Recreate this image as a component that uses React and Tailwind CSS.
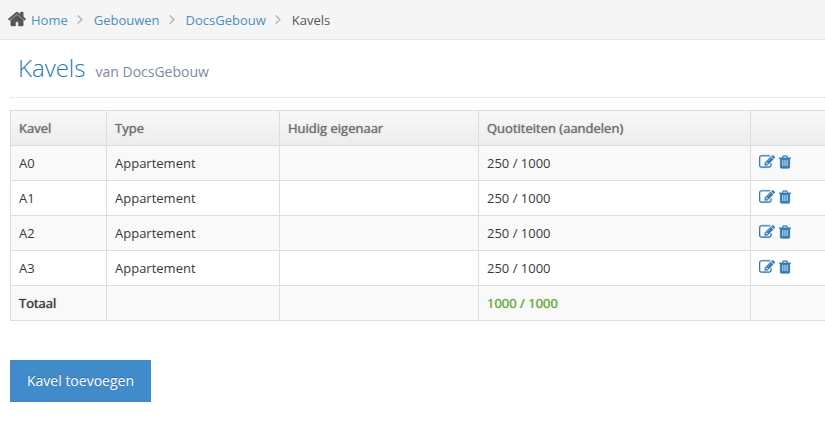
const units = [
  { name: "A0", type: "Appartement", owner: "", share: "250 / 1000" },
  { name: "A1", type: "Appartement", owner: "", share: "250 / 1000" },
  { name: "A2", type: "Appartement", owner: "", share: "250 / 1000" },
  { name: "A3", type: "Appartement", owner: "", share: "250 / 1000" },
];

const paths = {
  home: "M1472 992v480q0 26-19 45t-45 19h-384v-384h-256v384h-384q-26 0-45-19t-19-45v-480q0-1 .5-3t.5-3l575-474 575 474q1 2 1 6zm223-69l-62 74q-8 9-21 11h-3q-13 0-21-7l-692-577-692 577q-12 8-24 7-13-2-21-11l-62-74q-8-10-7-23.5t11-21.5l719-599q32-26 76-26t76 26l244 204v-195q0-14 9-23t23-9h192q14 0 23 9t9 23v408l219 182q10 8 11 21.5t-7 23.5z",
  angle: "M1171 960q0 13-10 23l-466 466q-10 10-23 10t-23-10l-50-50q-10-10-10-23t10-23l393-393-393-393q-10-10-10-23t10-23l50-50q10-10 23-10t23 10l466 466q10 10 10 23z",
  edit: "M888 1184l116-116-152-152-116 116v56h96v96h56zm440-720q-16-16-33 1l-350 350q-17 17-1 33t33-1l350-350q17-17 1-33zm80 594v190q0 119-84.5 203.5t-203.5 84.5h-832q-119 0-203.5-84.5t-84.5-203.5v-832q0-119 84.5-203.5t203.5-84.5h832q63 0 117 25 15 7 18 23 3 17-9 29l-49 49q-14 14-32 8-23-6-45-6h-832q-66 0-113 47t-47 113v832q0 66 47 113t113 47h832q66 0 113-47t47-113v-126q0-13 9-22l64-64q15-15 35-7t20 29zm-96-738l288 288-672 672h-288v-288zm444 132l-92 92-288-288 92-92q28-28 68-28t68 28l152 152q28 28 28 68t-28 68z",
  trash: "M704 1376v-704q0-14-9-23t-23-9h-64q-14 0-23 9t-9 23v704q0 14 9 23t23 9h64q14 0 23-9t9-23zm256 0v-704q0-14-9-23t-23-9h-64q-14 0-23 9t-9 23v704q0 14 9 23t23 9h64q14 0 23-9t9-23zm256 0v-704q0-14-9-23t-23-9h-64q-14 0-23 9t-9 23v704q0 14 9 23t23 9h64q14 0 23-9t9-23zm-544-992h448l-48-117q-7-9-17-11h-317q-10 2-17 11zm928 32v64q0 14-9 23t-23 9h-96v948q0 83-47 143.5t-113 60.5h-832q-66 0-113-58.5t-47-141.5v-952h-96q-14 0-23-9t-9-23v-64q0-14 9-23t23-9h309l70-167q15-37 54-63t79-26h320q40 0 79 26t54 63l70 167h309q14 0 23 9t9 23z",
};

function Icon({ name, className, viewBox = "0 0 1792 1792" }) {
  return (
    <svg viewBox={viewBox} className={className} fill="currentColor" aria-hidden="true">
      <path d={paths[name]} />
    </svg>
  );
}

function Separator() {
  return (
    <Icon
      name="angle"
      viewBox="560 440 640 1040"
      className="w-[6px] h-[9px] ml-[9px] mr-[11px] text-[#b2b6bf] stroke-current stroke-[40]"
    />
  );
}

function Breadcrumbs() {
  return (
    <nav aria-label="Breadcrumb" className="h-10 px-2 border-b border-[#e5e5e5] bg-[#f5f5f5]">
      <ol className="flex items-center h-full text-[13px] leading-5 text-[#4c8fbd]">
        <li className="flex items-center">
          <Icon
            name="home"
            viewBox="64 192 1664 1408"
            className="w-[18px] h-4 mb-[2px] mr-[5px] text-[#555555] stroke-current stroke-[40]"
          />
          <a href="#home">Home</a>
          <Separator />
        </li>
        <li className="flex items-center">
          <a href="#gebouwen">Gebouwen</a>
          <Separator />
        </li>
        <li className="flex items-center">
          <a href="#docsgebouw">DocsGebouw</a>
          <Separator />
        </li>
        <li className="text-[#555555]" aria-current="page">Kavels</li>
      </ol>
    </nav>
  );
}

function UnitsTable() {
  const cell = "h-[35px] px-2 border border-[#dddddd]";
  const head = `${cell} text-left font-normal [text-shadow:0_0_1px_currentColor]`;

  return (
    <table className="w-full table-fixed border-collapse text-[13px] leading-5 text-[#393939]">
      <colgroup>
        <col className="w-[96px]" />
        <col className="w-[173px]" />
        <col className="w-[199px]" />
        <col className="w-[272px]" />
        <col />
      </colgroup>
      <thead className="bg-linear-to-b from-[#f8f8f8] to-[#ececec] text-[#707070]">
        <tr>
          <th scope="col" className={head}>Kavel</th>
          <th scope="col" className={head}>Type</th>
          <th scope="col" className={head}>Huidig eigenaar</th>
          <th scope="col" className={head}>Quotiteiten (aandelen)</th>
          <td className={`${cell} border-r-0`} />
        </tr>
      </thead>
      <tbody>
        {units.map((unit) => (
          <tr key={unit.name} className="odd:bg-[#f9f9f9]">
            <td className={cell}>{unit.name}</td>
            <td className={cell}>{unit.type}</td>
            <td className={cell}>{unit.owner}</td>
            <td className={cell}>{unit.share}</td>
            <td className={`${cell} border-r-0`}>
              <div className="flex items-center gap-1 pb-[2px] text-[#337ab7]">
                <a href={`#edit-${unit.name}`} aria-label={`${unit.name} bewerken`}>
                  <Icon name="edit" className="w-4 h-4 stroke-current stroke-[30]" />
                </a>
                <button type="button" aria-label={`${unit.name} verwijderen`}>
                  <Icon name="trash" viewBox="192 128 1408 1536" className="w-3 h-[14px] stroke-current stroke-[30]" />
                </button>
              </div>
            </td>
          </tr>
        ))}
        <tr className="bg-[#f9f9f9]">
          <th scope="row" className={head}>Totaal</th>
          <td className={cell} />
          <td className={cell} />
          <td className={`${cell} text-[#69aa46] [text-shadow:0_0_1px_currentColor]`}>1000 / 1000</td>
          <td className={`${cell} border-r-0`} />
        </tr>
      </tbody>
    </table>
  );
}

export default function App() {
  return (
    <div className="min-h-screen bg-white font-['Open_Sans',sans-serif]">
      <Breadcrumbs />
      <main className="pl-[10px] pb-6">
        <header className="px-2 pt-[10px] pb-[11px] mb-3 border-b border-dotted border-[#d5d5d5]">
          <h1 className="flex items-baseline gap-[10px] text-2xl leading-9 font-light text-[#2679b5]">
            Kavels
            <small className="text-sm font-normal text-[#8089a0]">van DocsGebouw</small>
          </h1>
        </header>
        <UnitsTable />
        <button
          type="button"
          className="mt-[39px] h-[42px] px-[17px] bg-[#428bca] text-sm text-white [text-shadow:0_-1px_0_rgba(0,0,0,0.25)]"
        >
          Kavel toevoegen
        </button>
      </main>
    </div>
  );
}
